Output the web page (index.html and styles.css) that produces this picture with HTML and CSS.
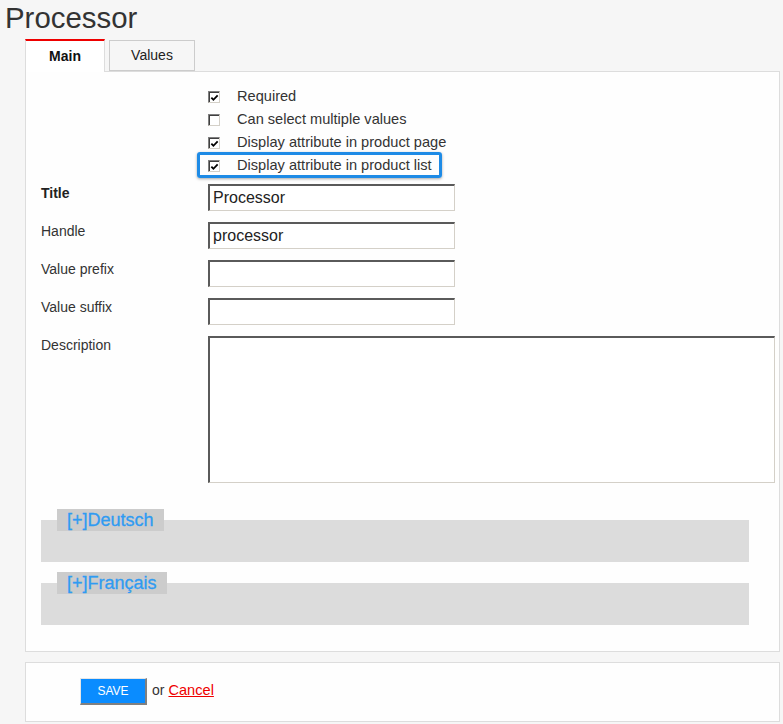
FILE: index.html
```html
<!DOCTYPE html>
<html>
<head>
<meta charset="utf-8">
<link rel="stylesheet" href="styles.css">
</head>
<body>
<h1 class="page-title">Processor</h1>
<div class="wrap">
  <div class="tabs">
    <div class="tab tab-active">Main</div>
    <div class="tab">Values</div>
  </div>
  <div class="panel">
    <div class="checks">
      <div class="check-row"><span class="cb"><svg viewBox="0 0 10 10" width="10" height="10"><path d="M1.5 4.5 L3.8 7 L8.5 2" fill="none" stroke="#000" stroke-width="2"/></svg></span><span class="check-label">Required</span></div>
      <div class="check-row"><span class="cb"></span><span class="check-label">Can select multiple values</span></div>
      <div class="check-row"><span class="cb"><svg viewBox="0 0 10 10" width="10" height="10"><path d="M1.5 4.5 L3.8 7 L8.5 2" fill="none" stroke="#000" stroke-width="2"/></svg></span><span class="check-label">Display attribute in product page</span></div>
      <div class="check-row check-hl"><span class="cb"><svg viewBox="0 0 10 10" width="10" height="10"><path d="M1.5 4.5 L3.8 7 L8.5 2" fill="none" stroke="#000" stroke-width="2"/></svg></span><span class="check-label">Display attribute in product list</span><span class="hl-box"></span></div>
    </div>
    <div class="form-row"><label class="lbl lbl-bold">Title</label><div class="field">Processor</div></div>
    <div class="form-row"><label class="lbl">Handle</label><div class="field">processor</div></div>
    <div class="form-row"><label class="lbl">Value prefix</label><div class="field"></div></div>
    <div class="form-row"><label class="lbl">Value suffix</label><div class="field"></div></div>
    <div class="form-row"><label class="lbl">Description</label><div class="field area"></div></div>
    <div class="lang lang-first"><span class="lang-legend">[+]Deutsch</span></div>
    <div class="lang"><span class="lang-legend">[+]Français</span></div>
  </div>
  <div class="footer">
    <span class="btn-save">SAVE</span><span class="or">or</span><a class="cancel" href="#">Cancel</a>
  </div>
</div>
</body>
</html>
```
FILE: styles.css
```css
html, body { margin: 0; padding: 0; }
body {
  background: #f6f6f6;
  font-family: "Liberation Sans", Arial, sans-serif;
  color: #333;
  width: 783px;
  height: 724px;
  overflow: hidden;
}
.page-title {
  margin: 1px 0 0 5px;
  font-size: 29.4px;
  line-height: 34px;
  font-weight: normal;
  color: #333;
}
.wrap {
  margin: 4px 0 0 25px;
  width: 755px;
}
.tabs {
  display: flex;
  align-items: flex-start;
}
.tab {
  box-sizing: border-box;
  font-size: 14px;
  text-align: center;
  color: #222;
}
.tab-active {
  width: 80px;
  height: 33px;
  margin-bottom: -1px;
  background: #fff;
  border-top: 2px solid #e00;
  border-left: 1px solid #ddd;
  border-right: 1px solid #ddd;
  line-height: 30px;
  font-weight: bold;
  color: #111;
  position: relative;
  z-index: 1;
}
.tab:not(.tab-active) {
  width: 86px;
  height: 31px;
  margin-top: 1px;
  margin-left: 4px;
  border: 1px solid #ccc;
  line-height: 29px;
}
.panel {
  box-sizing: border-box;
  background: #fefefe;
  border: 1px solid #ddd;
  padding: 12px 3px 26px 15px;
}
.checks {
  padding-left: 167px;
}
.check-row {
  display: flex;
  align-items: center;
  height: 23px;
  position: relative;
  width: max-content;
}
.cb {
  box-sizing: border-box;
  width: 12px;
  height: 12px;
  margin-top: 3px;
  margin-right: 17px;
  background: #fff;
  border: 1px solid;
  border-color: #808080 #d4d0c8 #d4d0c8 #808080;
  box-shadow: inset 1px 1px 0 #404040;
  display: flex;
  align-items: center;
  justify-content: center;
}
.cb svg { display: block; margin: 1px 0 0 1px; }
.check-label {
  font-size: 14.6px;
  color: #333;
}
.hl-box {
  position: absolute;
  left: -11px;
  right: -10px;
  top: -1px;
  bottom: -2px;
  border: 3px solid #1e8be6;
  border-radius: 3px;
  box-shadow: 0 1px 3px rgba(0,0,0,0.35);
}
.form-row {
  display: flex;
  align-items: flex-start;
  margin-top: 11px;
}
.checks + .form-row { margin-top: 8px; }
.lbl {
  width: 167px;
  font-size: 14px;
  line-height: 18px;
  color: #333;
}
.lbl-bold { font-weight: bold; color: #222; }
.field {
  box-sizing: border-box;
  width: 247px;
  height: 27px;
  background: #fff;
  border-top: 2px solid #5a5a5a;
  border-left: 2px solid #5a5a5a;
  border-right: 1px solid #d4d0c8;
  border-bottom: 1px solid #d4d0c8;
  font-size: 16px;
  line-height: 24px;
  padding-left: 3px;
  color: #222;
}
.field.area {
  width: 567px;
  height: 147px;
}
.lang {
  width: 708px;
  height: 42px;
  background: #dcdcdc;
  display: flex;
  align-items: flex-start;
  margin-top: 21px;
}
.lang-first { margin-top: 37px; }
.lang-legend {
  margin: -11px 0 0 16px;
  height: 22px;
  line-height: 22px;
  padding: 0 10px;
  background: #cccccc;
  color: #2f9bf2;
  font-size: 18px;
  -webkit-text-stroke: 0.3px #2f9bf2;
}
.footer {
  box-sizing: border-box;
  margin-top: 10px;
  height: 60px;
  background: #fefefe;
  border: 1px solid #ddd;
  padding: 15px 0 0 54px;
  display: flex;
  align-items: flex-start;
}
.btn-save {
  box-sizing: border-box;
  width: 67px;
  height: 27px;
  background: #0a8cff;
  border-style: solid;
  border-width: 1px 2px 2px 1px;
  border-color: #e6e6e6 #808080 #808080 #e6e6e6;
  color: #fff;
  font-size: 12px;
  line-height: 24px;
  text-align: center;
}
.or {
  margin-left: 5px;
  font-size: 14px;
  line-height: 24px;
  color: #333;
}
.cancel {
  margin-left: 4px;
  font-size: 14.6px;
  line-height: 24px;
  color: #e00;
  text-decoration: underline;
}
```
